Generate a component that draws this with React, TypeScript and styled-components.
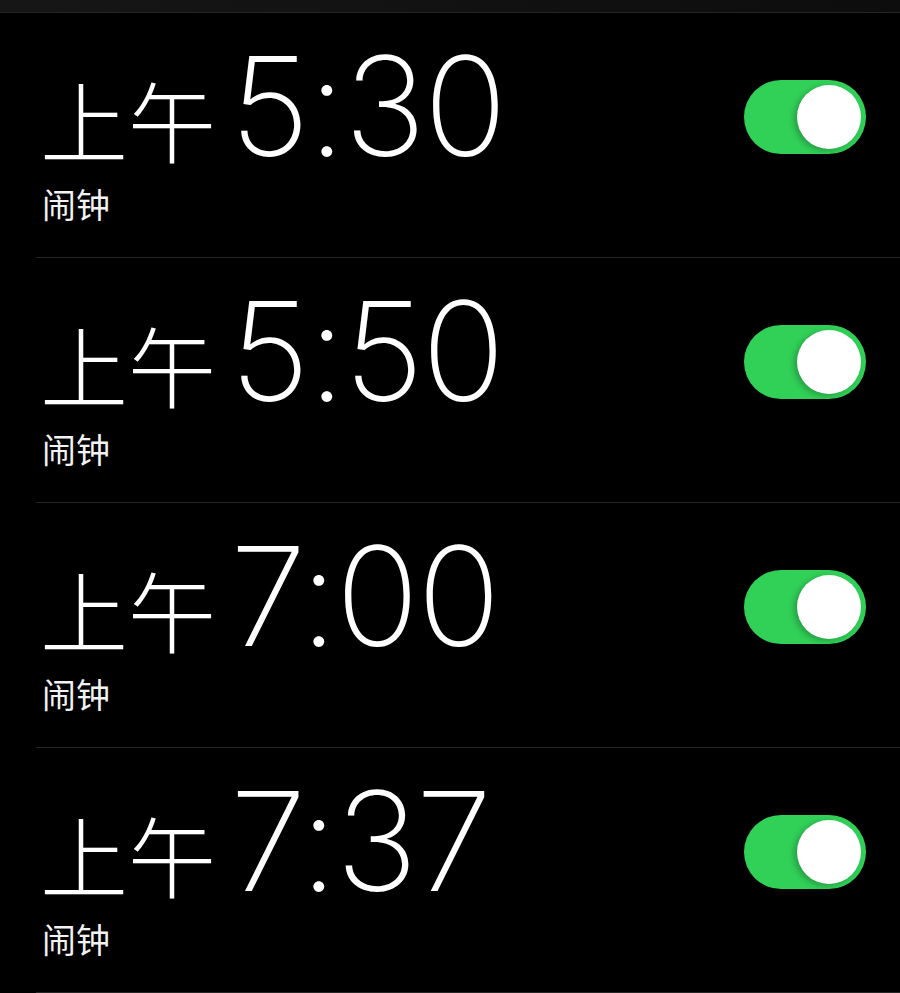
import React from "react";
import styled, { createGlobalStyle } from "styled-components";

const Global = createGlobalStyle`
  html, body { margin: 0; padding: 0; background: #000; }
  body { font-family: "Inter", "Noto Sans CJK SC", sans-serif; color: #fff; }
`;

const Screen = styled.div`
  width: 900px;
  height: 993px;
  background: #000;
  overflow: hidden;
  display: flex;
  flex-direction: column;
`;

const TopBar = styled.div`
  height: 12px;
  background: linear-gradient(90deg, #161616, #0d0d0d);
  border-bottom: 1px solid #262626;
  flex-shrink: 0;
`;

const Row = styled.div`
  height: 244px;
  margin-left: 36px;
  padding-left: 6px;
  padding-right: 34px;
  border-bottom: 1px solid #262626;
  display: flex;
  align-items: flex-start;
  justify-content: space-between;
  flex-shrink: 0;
`;

const Info = styled.div`
  display: flex;
  flex-direction: column;
  padding-top: 24px;
`;

const TimeLine = styled.div`
  display: flex;
  align-items: baseline;
  line-height: 1;
`;

const Period = styled.span`
  font-family: "Noto Sans CJK SC", sans-serif;
  font-weight: 300;
  font-size: 88px;
  margin-right: 14px;
  margin-left: -2px;
`;

const Digits = styled.span`
  font-family: "Inter", sans-serif;
  font-weight: 200;
  font-size: 138px;
  letter-spacing: -2px;
`;

const Label = styled.div`
  font-family: "Noto Sans CJK SC", sans-serif;
  font-size: 34px;
  line-height: 1;
  margin-top: 12px;
  color: #f2f2f2;
`;

const Toggle = styled.div<{ $on: boolean }>`
  margin-top: 67px;
  width: 122px;
  height: 74px;
  border-radius: 37px;
  background: ${(p) => (p.$on ? "#31d158" : "#39393d")};
  position: relative;
  flex-shrink: 0;
`;

const Knob = styled.div`
  position: absolute;
  top: 5px;
  right: 5px;
  width: 64px;
  height: 64px;
  border-radius: 50%;
  background: #fff;
  box-shadow: -3px 2px 6px rgba(0, 0, 0, 0.25);
`;

const alarms = ["5:30", "5:50", "7:00", "7:37"];

export default function App() {
  return (
    <Screen>
      <Global />
      <TopBar />
      {alarms.map((t) => (
        <Row key={t}>
          <Info>
            <TimeLine>
              <Period>上午</Period>
              <Digits>{t}</Digits>
            </TimeLine>
            <Label>闹钟</Label>
          </Info>
          <Toggle $on>
            <Knob />
          </Toggle>
        </Row>
      ))}
    </Screen>
  );
}
